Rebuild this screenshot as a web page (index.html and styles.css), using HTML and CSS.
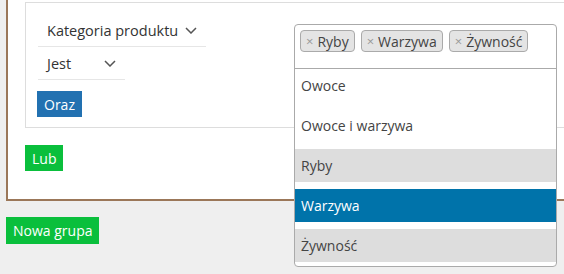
FILE: index.html
```html
<!DOCTYPE html>
<html lang="pl">
<head>
    <meta charset="UTF-8">
    <title>Reguły</title>
    <link rel="stylesheet" href="styles.css">
</head>
<body>

<div class="page">
    <div class="group">
        <div class="rule">
            <div class="field field-wide">
                <span>Kategoria produktu</span>
                <svg class="chevron" width="12" height="7" viewBox="0 0 12 7"><path d="M1 1l5 5 5-5" fill="none" stroke="#555" stroke-width="1.5"/></svg>
            </div>
            <div class="field field-narrow">
                <span>Jest</span>
                <svg class="chevron" width="12" height="7" viewBox="0 0 12 7"><path d="M1 1l5 5 5-5" fill="none" stroke="#555" stroke-width="1.5"/></svg>
            </div>
            <button class="btn btn-blue">Oraz</button>
        </div>
        <button class="btn btn-green">Lub</button>
    </div>

    <button class="btn btn-green btn-group">Nowa grupa</button>

    <div class="dropdown">
        <div class="selection">
            <span class="tag"><span class="tag-x">×</span>Ryby</span>
            <span class="tag"><span class="tag-x">×</span>Warzywa</span>
            <span class="tag"><span class="tag-x">×</span>Żywność</span>
        </div>
        <ul class="options">
            <li>Owoce</li>
            <li>Owoce i warzywa</li>
            <li class="selected">Ryby</li>
            <li class="highlighted">Warzywa</li>
            <li class="selected">Żywność</li>
        </ul>
    </div>
</div>

</body>
</html>
```

FILE: styles.css
```css
body {
    margin: 0;
    background-color: #efefef;
    font-family: "Open Sans", "Noto Sans", sans-serif;
    font-size: 14px;
    color: #333;
}
.page {
    position: relative;
    height: 274px;
    overflow: hidden;
    padding-left: 6px;
}
.group {
    width: 620px;
    margin-top: -14px;
    padding: 14px 0 28px 17px;
    background-color: white;
    border: 2px solid #9b7759;
}
.rule {
    padding: 11px 0 10px 11px;
    border: 1px solid #dddddd;
    margin-bottom: 17px;
}
.field {
    display: flex;
    align-items: center;
    justify-content: space-between;
    box-sizing: border-box;
    height: 33px;
    margin-left: 1px;
    padding: 0 9px;
    border-bottom: 1px solid #e6e6e6;
    font-size: 14.5px;
}
.field-wide {
    width: 168px;
}
.field-narrow {
    width: 87px;
}
.btn {
    display: block;
    height: 26px;
    padding: 0 7px;
    border: none;
    font-family: inherit;
    font-size: 14px;
    color: white;
    cursor: pointer;
}
.btn-blue {
    margin-top: 11px;
    background-color: #2271b1;
}
.btn-green {
    background-color: #0abf3c;
}
.btn-group {
    height: 27px;
    margin-top: 16px;
}
.dropdown {
    position: absolute;
    left: 294px;
    top: 24px;
    width: 263px;
    height: 243px;
    box-sizing: border-box;
    background-color: white;
    border: 1px solid #aaaaaa;
    border-radius: 4px;
    overflow: hidden;
}
.selection {
    display: flex;
    gap: 6px;
    height: 44px;
    box-sizing: border-box;
    padding: 5px 0 0 5px;
    border-bottom: 1px solid #aaaaaa;
}
.tag {
    display: flex;
    align-items: center;
    height: 22px;
    box-sizing: border-box;
    padding: 0 5px;
    background-color: #e4e4e4;
    border: 1px solid #aaaaaa;
    border-radius: 4px;
    color: #444;
}
.tag-x {
    margin-right: 4px;
    color: #999;
    font-size: 13px;
}
.options {
    list-style: none;
    margin: 0;
    padding: 0;
}
.options li {
    display: flex;
    align-items: center;
    height: 33px;
    margin-bottom: 7px;
    padding-left: 6px;
    color: #444;
}
.options .selected {
    background-color: #dddddd;
}
.options .highlighted {
    background-color: #0073aa;
    color: white;
}
```
